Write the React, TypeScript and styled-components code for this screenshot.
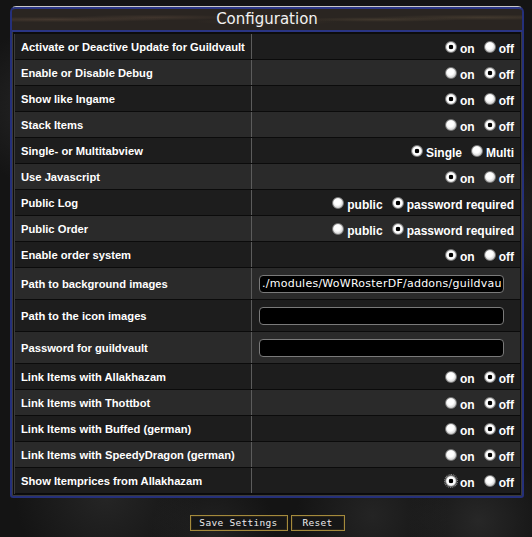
import styled, { createGlobalStyle } from 'styled-components';

const GlobalStyle = createGlobalStyle`
  html, body {
    margin: 0;
    padding: 0;
    background-color: #141414;
    background-image:
      radial-gradient(circle at 8% 20%, rgba(70, 70, 70, 0.35) 0, transparent 12%),
      radial-gradient(circle at 20% 92%, rgba(70, 70, 70, 0.35) 0, transparent 14%),
      radial-gradient(circle at 70% 96%, rgba(60, 60, 60, 0.4) 0, transparent 12%),
      radial-gradient(circle at 95% 40%, rgba(60, 60, 60, 0.35) 0, transparent 12%),
      radial-gradient(circle at 90% 97%, rgba(75, 75, 75, 0.35) 0, transparent 10%),
      radial-gradient(circle at 40% 99%, rgba(55, 55, 55, 0.4) 0, transparent 10%);
    min-height: 537px;
  }
`;

const Page = styled.div`
  width: 532px;
  height: 537px;
  overflow: hidden;
  padding-top: 6px;
  box-sizing: border-box;
`;

const Frame = styled.div`
  margin-left: 10px;
  width: 514px;
  box-sizing: border-box;
  border: 2px solid #25307a;
  border-top: 1px solid #c8c8c8;
  border-radius: 6px 6px 3px 3px;
  background: #0c0c0c;
  padding: 0 2px 2px;
  box-shadow: inset 1px 0 0 #3a3a3a, inset -1px 0 0 #3a3a3a, inset 0 -1px 0 #3a3a3a;
`;

const Header = styled.div`
  height: 21px;
  margin: 0 -2px;
  border-top: 2px solid #2a3584;
  border-bottom: 2px solid #2a3584;
  border-radius: 4px 4px 0 0;
  background-color: #2a2521;
  background-image:
    radial-gradient(ellipse at 8% 50%, rgba(95, 75, 60, 0.5) 0, transparent 18%),
    radial-gradient(ellipse at 28% 40%, rgba(90, 72, 58, 0.45) 0, transparent 16%),
    radial-gradient(ellipse at 50% 60%, rgba(80, 65, 50, 0.35) 0, transparent 20%),
    radial-gradient(ellipse at 72% 50%, rgba(95, 80, 60, 0.45) 0, transparent 16%),
    radial-gradient(ellipse at 92% 40%, rgba(95, 80, 60, 0.45) 0, transparent 16%);
  display: flex;
  align-items: center;
  justify-content: center;
  font-family: 'DejaVu Sans', sans-serif;
  font-size: 15px;
  color: #f2f2f2;
  line-height: 21px;
`;

const Table = styled.div`
  margin-top: 2px;
  border-left: 1px solid #3c3c3c;
`;

const Row = styled.div<{ $alt: boolean; $tall?: boolean }>`
  display: grid;
  grid-template-columns: 237px 1fr;
  height: ${({ $tall }) => ($tall ? 31 : 25)}px;
  border-bottom: 1px solid #0b0b0b;
  background: ${({ $alt }) => ($alt ? '#2a2a2a' : '#1d1d1d')};
`;

const Label = styled.div`
  display: flex;
  align-items: center;
  padding-left: 6px;
  border-right: 1px solid #5c5c5c;
  font-family: 'Liberation Sans', Arial, sans-serif;
  font-weight: bold;
  font-size: 11.2px;
  color: #ffffff;
`;

const Value = styled.div`
  display: flex;
  align-items: center;
  justify-content: flex-end;
  gap: 9px;
  padding-right: 6px;
`;

const InputCell = styled.div`
  display: flex;
  align-items: center;
  padding-left: 7px;
`;

const TextField = styled.input`
  width: 245px;
  height: 18px;
  box-sizing: border-box;
  background: #000;
  border: 1px solid #7a7a7a;
  border-radius: 4px;
  color: #ffffff;
  font-family: 'DejaVu Sans', Verdana, sans-serif;
  font-size: 11px;
  letter-spacing: 0.25px;
  padding: 0 2px;
  outline: none;
`;

const Option = styled.label`
  display: inline-flex;
  align-items: center;
  font-family: 'Liberation Sans', Arial, sans-serif;
  font-weight: bold;
  font-size: 12px;
  color: #ffffff;
  span {
    padding-top: 4px;
  }
`;

const Radio = styled.input<{ $focus?: boolean }>`
  appearance: none;
  margin: 0 3px 0 0;
  width: 12px;
  height: 12px;
  border-radius: 50%;
  border: 1px solid #7a7a7a;
  background: radial-gradient(circle at 45% 40%, #ffffff 0 3px, #d6d6d6 5.5px);
  outline: ${({ $focus }) => ($focus ? '1px dotted #9a9a9a' : 'none')};
  outline-offset: 0;
  &:checked {
    background: radial-gradient(circle at 50% 50%, #000 0 2px, #ffffff 2.6px 3.6px, #d0d0d0 5.5px);
  }
`;

const Buttons = styled.div`
  display: flex;
  justify-content: center;
  gap: 3px;
  margin-top: 17px;
  padding-left: 2px;
`;

const Button = styled.button<{ $width: number }>`
  width: ${({ $width }) => $width}px;
  height: 16px;
  padding: 0;
  background: #161616;
  border: 1px solid #a48a3c;
  box-shadow: inset 0 0 0 1px #2a2418;
  color: #ececec;
  font-family: 'DejaVu Sans Mono', monospace;
  font-size: 9.5px;
  letter-spacing: 0.3px;
  line-height: 14px;
`;

type Setting =
  | { label: string; kind: 'radio'; options: string[]; selected: number; focus?: boolean }
  | { label: string; kind: 'text'; value: string; password?: boolean };

const onOff = (label: string, selected: number, focus?: boolean): Setting => ({
  label,
  kind: 'radio',
  options: ['on', 'off'],
  selected,
  focus,
});

const settings: Setting[] = [
  onOff('Activate or Deactive Update for Guildvault', 0),
  onOff('Enable or Disable Debug', 1),
  onOff('Show like Ingame', 0),
  onOff('Stack Items', 1),
  { label: 'Single- or Multitabview', kind: 'radio', options: ['Single', 'Multi'], selected: 0 },
  onOff('Use Javascript', 0),
  { label: 'Public Log', kind: 'radio', options: ['public', 'password required'], selected: 1 },
  { label: 'Public Order', kind: 'radio', options: ['public', 'password required'], selected: 1 },
  onOff('Enable order system', 0),
  { label: 'Path to background images', kind: 'text', value: './modules/WoWRosterDF/addons/guildvault/images/' },
  { label: 'Path to the icon images', kind: 'text', value: '' },
  { label: 'Password for guildvault', kind: 'text', value: '', password: true },
  onOff('Link Items with Allakhazam', 1),
  onOff('Link Items with Thottbot', 1),
  onOff('Link Items with Buffed (german)', 1),
  onOff('Link Items with SpeedyDragon (german)', 1),
  onOff('Show Itemprices from Allakhazam', 0, true),
];

const App = () => {
  return (
    <Page>
      <GlobalStyle />
      <Frame>
        <Header>Configuration</Header>
        <Table>
          {settings.map((s, i) => (
            <Row key={s.label} $alt={i % 2 === 1} $tall={s.kind === 'text'}>
              <Label>{s.label}</Label>
              {s.kind === 'radio' ? (
                <Value>
                  {s.options.map((opt, j) => (
                    <Option key={opt}>
                      <Radio
                        type="radio"
                        name={`setting-${i}`}
                        defaultChecked={j === s.selected}
                        $focus={s.focus && j === s.selected}
                      />
                      <span>{opt}</span>
                    </Option>
                  ))}
                </Value>
              ) : (
                <InputCell>
                  <TextField type={s.password ? 'password' : 'text'} defaultValue={s.value} />
                </InputCell>
              )}
            </Row>
          ))}
        </Table>
      </Frame>
      <Buttons>
        <Button $width={98}>Save Settings</Button>
        <Button $width={54}>Reset</Button>
      </Buttons>
    </Page>
  );
};

export default App;
